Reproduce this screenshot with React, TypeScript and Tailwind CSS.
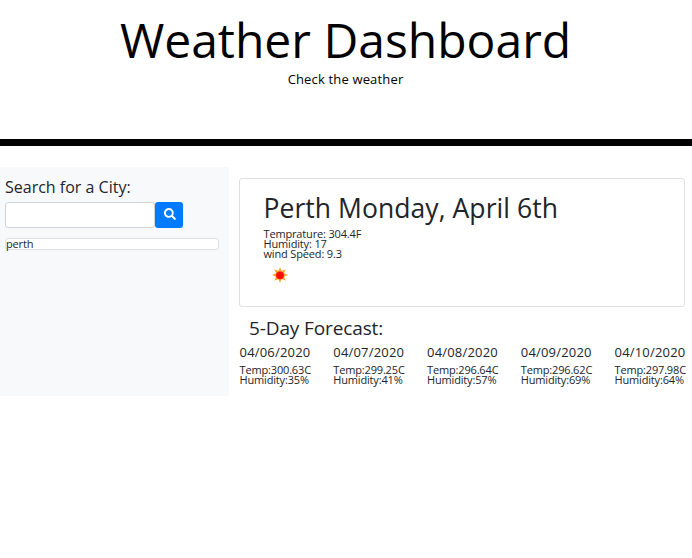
import { FaSearch } from "react-icons/fa";

const days = [
  ["04/06/2020", "300.63", "35"],
  ["04/07/2020", "299.25", "41"],
  ["04/08/2020", "296.64", "57"],
  ["04/09/2020", "296.62", "69"],
  ["04/10/2020", "297.98", "64"],
];

const rays = [0, 45, 90, 135, 180, 225, 270, 315];

function Sun() {
  return (
    <svg width="16" height="16" viewBox="0 0 16 16">
      {rays.map((angle) => (
        <path key={angle} d="M8 0L9.700 4.500H6.300z" fill="#ff9f1f" transform={`rotate(${angle} 8 8)`} />
      ))}
      <circle cx="8" cy="8" r="4.700" fill="#ffa94a" />
      <circle cx="8" cy="8.300" r="3.900" fill="#ff0d00" />
    </svg>
  );
}

export default function App() {
  return (
    <div className="h-[558px] w-[692px] overflow-hidden bg-white font-['Open_Sans',sans-serif] text-[#212529]">
      <header className="h-[146px] border-b-[7px] border-black text-center text-black">
        <h1 className="mr-[1px] pt-[12px] text-[48px] leading-[56px]">Weather Dashboard</h1>
        <p className="mr-[1px] mt-[1px] text-[13px] leading-[20px] tracking-[0.16px]">Check the weather</p>
      </header>
      <main className="flex pt-[21px]">
        <aside className="h-[229px] w-[229px] bg-[#f8f9fb] pl-[5px] pt-[10px]">
          <h2 className="text-[16px] leading-[20px]">Search for a City:</h2>
          <div className="mt-[5px] flex">
            <input className="h-[26px] w-[150px] rounded-[3px] border border-[#ced4da] bg-white" />
            <button className="flex h-[26px] w-[28px] items-center justify-center rounded-[3px] bg-[#007bff] pb-[2px] pl-[1px] text-white">
              <FaSearch size={12} />
            </button>
          </div>
          <div className="mt-[10px] h-[12px] w-[214px] rounded-[3px] border border-[#dfdfdf] bg-white text-[11px] leading-[10px] tracking-[-0.15px]">perth</div>
        </aside>
        <section className="ml-[10px] w-[446px] pt-[11px]">
          <div className="h-[129px] rounded-[3px] border border-[#dfdfdf] pl-[23.5px] pt-[13px]">
            <h2 className="text-[26.5px] leading-[32px] tracking-[0.06px]">Perth Monday, April 6th</h2>
            <div className="mt-[5px] text-[11px] leading-[10px] tracking-[-0.16px]">
              <p>Temprature: 304.4F</p>
              <p>Humidity: 17</p>
              <p>wind Speed: 9.3</p>
            </div>
            <div className="ml-[8.5px] mt-[8px]"><Sun /></div>
          </div>
          <h3 className="ml-[10px] mt-[9px] text-[19px] leading-[24px] tracking-[-0.12px]">5-Day Forecast:</h3>
          <div className="mt-[4px] flex justify-between">
            {days.map(([date, temp, humidity]) => (
              <div key={date} className="w-[71px] whitespace-nowrap pl-[0.5px] text-[11px] leading-[10px] tracking-[-0.16px]">
                <h4 className="mb-[5px] text-[13px] leading-[16px] tracking-[0.2px]">{date}</h4>
                <p>Temp:{temp}C</p>
                <p>Humidity:{humidity}%</p>
              </div>
            ))}
          </div>
        </section>
      </main>
    </div>
  );
}
